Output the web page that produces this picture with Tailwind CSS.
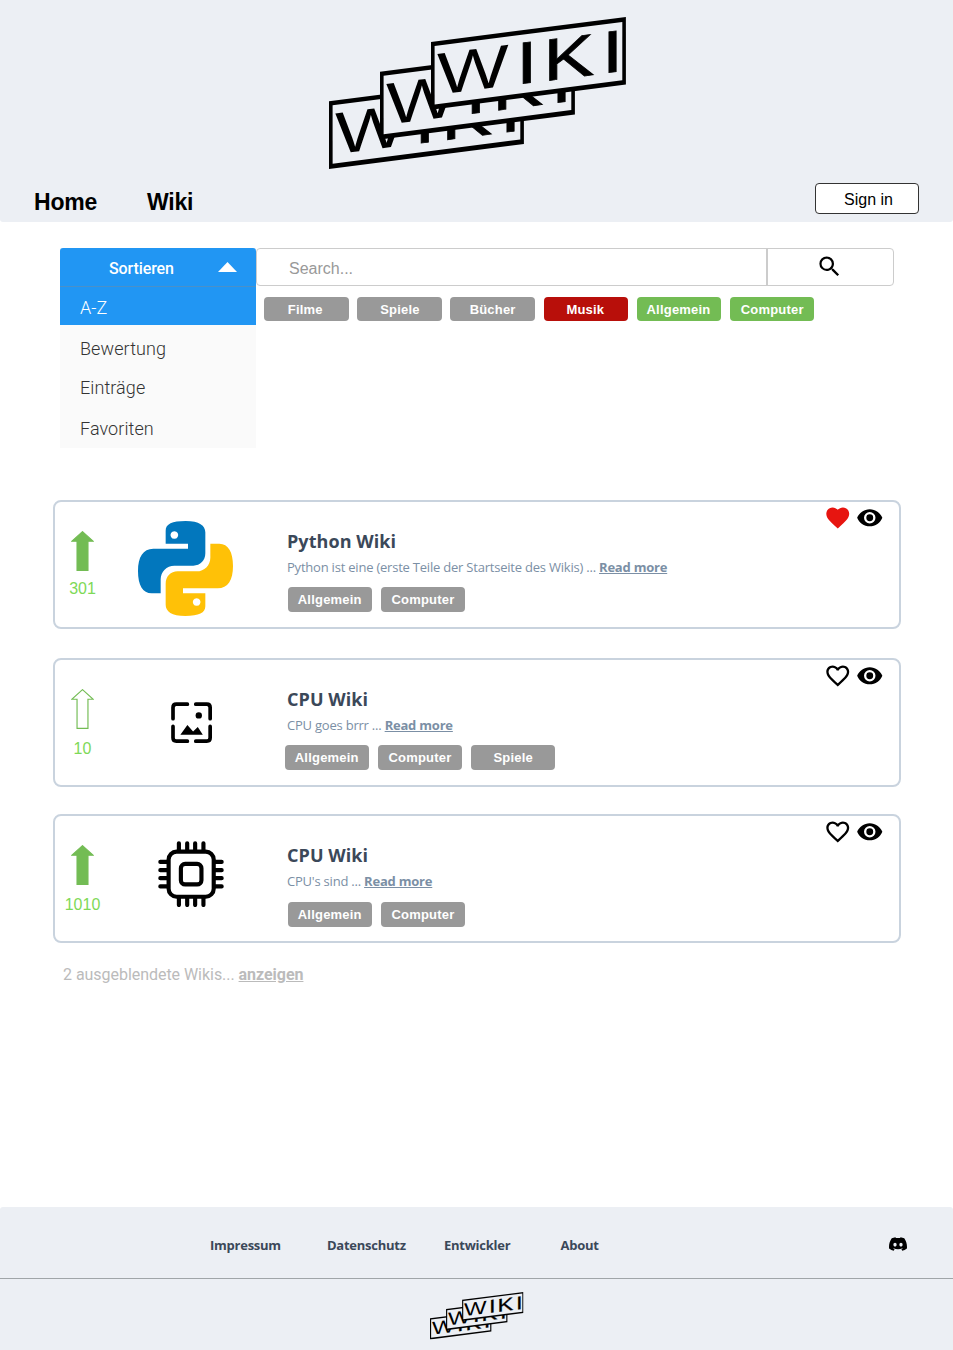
<!DOCTYPE html>
<html lang="de">
<head>
<meta charset="utf-8">
<title>Wiki</title>
<script src="https://cdn.jsdelivr.net/npm/@tailwindcss/browser@4"></script>
</head>
<body class="bg-white font-['Liberation_Sans',sans-serif] w-[953px]">
<svg class="hidden">
  <defs>
    <g id="plate">
      <path d="M0 25 L194.900 0 V67.600 L0 92.800Z" fill="#000"/>
      <path d="M3.600 28.900 L191.300 4.900 V63.200 L3.600 87.500Z" fill="#eceff4"/>
      <text transform="matrix(1.28 -0.1646 0 1 0 78.6)" font-family="Liberation Sans, sans-serif" font-size="59.3" stroke="#000" stroke-width=".8" x="4.7 66.7 87.9 133.6" y="0"><tspan stroke="none">W</tspan>IKI</text>
    </g>
    <symbol id="logo" viewBox="0 0 297 152.500" preserveAspectRatio="none">
      <use href="#plate" x="0" y="59.300"/>
      <use href="#plate" x="51" y="29.800"/>
      <use href="#plate" x="102" y="0"/>
    </symbol>
    <symbol id="heart" viewBox="0 0 24 24"><path d="M12,21.35L10.55,20.03C5.4,15.36 2,12.27 2,8.5C2,5.41 4.42,3 7.5,3C9.24,3 10.91,3.81 12,5.08C13.09,3.81 14.76,3 16.5,3C19.58,3 22,5.41 22,8.5C22,12.27 18.6,15.36 13.45,20.03L12,21.35Z"/></symbol>
    <symbol id="heart-o" viewBox="0 0 24 24"><path d="M12.1,18.55L12,18.65L11.89,18.55C7.14,14.24 4,11.39 4,8.5C4,6.5 5.5,5 7.5,5C9.04,5 10.54,6 11.07,7.36H12.93C13.46,6 14.96,5 16.5,5C18.5,5 20,6.5 20,8.5C20,11.39 16.86,14.24 12.1,18.55M16.5,3C14.76,3 13.09,3.81 12,5.08C10.91,3.81 9.24,3 7.5,3C4.42,3 2,5.41 2,8.5C2,12.27 5.4,15.36 10.55,20.03L12,21.35L13.45,20.03C18.6,15.36 22,12.27 22,8.5C22,5.41 19.58,3 16.5,3Z"/></symbol>
    <symbol id="eye" viewBox="0 0 24 24"><path d="M12,9A3,3 0 0,0 9,12A3,3 0 0,0 12,15A3,3 0 0,0 15,12A3,3 0 0,0 12,9M12,17A5,5 0 0,1 7,12A5,5 0 0,1 12,7A5,5 0 0,1 17,12A5,5 0 0,1 12,17M12,4.5C7,4.5 2.73,7.61 1,12C2.73,16.39 7,19.5 12,19.5C17,19.5 21.27,16.39 23,12C21.27,7.61 17,4.5 12,4.5Z"/></symbol>
    <symbol id="up" viewBox="0 0 69 121"><path d="M34.500 2 L67 31 H51 V119 H18 V31 H2Z" stroke-width="3.500"/></symbol>
  </defs>
</svg>

<div class="flex h-[1350px] flex-col">
  <header class="flex h-[222px] shrink-0 flex-col rounded-b-[3px] bg-[#eceff4]">
    <svg class="ml-[329.300px] mt-[17px] h-[152.500px] w-[297px] shrink-0"><use href="#logo"/></svg>
    <div class="mt-[13.500px] flex items-start pl-[34px] pr-[34px]">
      <nav class="flex pt-[3px] text-[23px] leading-8 font-bold tracking-[-0.200px] text-black">
        <a class="w-[113px]">Home</a>
        <a>Wiki</a>
      </nav>
      <button class="ml-auto flex h-[31px] w-[104px] items-center justify-center rounded-[4px] border border-[#333] bg-white pl-[3px] pt-[2px] text-[16px] text-black">Sign in</button>
    </div>
  </header>

  <section class="mt-[26px] flex h-[200px] shrink-0 pl-[60px]">
    <div class="flex w-[196px] flex-col bg-[#fafafa] font-[Roboto,sans-serif] text-[18px] font-light text-[#333]">
      <div class="flex h-[39px] shrink-0 items-center rounded-t-[3px] border-b border-[#4a90c8] bg-[#2196f3] pl-[49px] pt-[3px] text-[16px] font-medium tracking-[-0.100px] text-white">
        <span>Sortieren</span>
        <svg class="mb-[3px] ml-auto mr-[19px] h-[10px] w-[19px]" viewBox="0 0 19 10"><path d="M9.500 0 19 10H0z" fill="#fff"/></svg>
      </div>
      <div class="flex h-[38px] shrink-0 items-center bg-[#2196f3] pl-[20px] pt-[2px] text-white">A-Z</div>
      <div class="flex h-[41px] shrink-0 items-center pl-[20px] pt-[6px] tracking-[0.080px]">Bewertung</div>
      <div class="flex h-[41px] shrink-0 items-center pl-[20px] pt-px tracking-[0.080px]">Einträge</div>
      <div class="flex h-[41px] shrink-0 items-center pl-[20px] pt-px tracking-[0.080px]">Favoriten</div>
    </div>
    <div class="flex w-[638px] flex-col">
      <div class="flex h-[38px] rounded-[4px] border border-[#ccc]">
        <div class="flex w-[510.500px] items-center border-r-2 border-[#ccc] pl-[32px] pt-[3px] text-[16px] text-[#999]">Search...</div>
        <div class="flex flex-1 items-center pb-[2px] pl-[48.500px]">
          <svg class="h-[27px] w-[27px]" viewBox="0 0 24 24"><path d="M9.500,3A6.500,6.500 0 0,1 16,9.500C16,11.110 15.410,12.590 14.440,13.730L14.710,14H15.500L20.500,19L19,20.500L14,15.500V14.710L13.730,14.440C12.590,15.410 11.110,16 9.500,16A6.500,6.500 0 0,1 3,9.500A6.500,6.500 0 0,1 9.500,3M9.500,5C7,5 5,7 5,9.500C5,12 7,14 9.500,14C12,14 14,12 14,9.500C14,7 12,5 9.500,5Z"/></svg>
        </div>
      </div>
      <div class="mt-[10.500px] flex gap-[8.700px] pl-[8px] text-[13px] font-bold tracking-[0.200px] text-white">
        <span class="flex h-[24.500px] w-[84.500px] items-center justify-center rounded-[4px] bg-[#999] pr-[2px] pt-px">Filme</span>
        <span class="flex h-[24.500px] w-[84.500px] items-center justify-center rounded-[4px] bg-[#999] pl-px pt-px">Spiele</span>
        <span class="flex h-[24.500px] w-[84.500px] items-center justify-center rounded-[4px] bg-[#999] pt-px">Bücher</span>
        <span class="flex h-[24.500px] w-[84.500px] items-center justify-center rounded-[4px] bg-[#b80f0a] pr-px pt-px">Musik</span>
        <span class="flex h-[24.500px] w-[84.500px] items-center justify-center rounded-[4px] bg-[#73bc54] pr-px pt-px">Allgemein</span>
        <span class="flex h-[24.500px] w-[84.500px] items-center justify-center rounded-[4px] bg-[#73bc54] pt-px">Computer</span>
      </div>
    </div>
  </section>

  <main class="mt-[52px] flex w-[901px] flex-col pl-[52.500px]">
    <article class="flex h-[129px] rounded-[8px] border-[2.500px] border-[#c9d3de]">
      <div class="flex w-[56px] shrink-0 flex-col items-center pt-[28.500px]">
        <svg class="h-[40px] w-[23px]" fill="#73bc54" stroke="#73bc54"><use href="#up"/></svg>
        <span class="mt-[8px] text-[16px] leading-5 text-[#7ed957]">301</span>
      </div>
      <div class="w-[176.500px] shrink-0 pl-[27.500px] pt-[18.500px]">
        <svg class="h-[95px] w-[95px]" viewBox="264 93 285 285">
          <defs><path id="snake" d="M347 161V122C347 102 366 93 407 93S466 107 466 127V190C466 211 451 227 430 227H373C350 227 332 245 332 268V310H305C278 310 264 285 264 243S279 176 310 176H414V161ZM373 123.500a11.500 11.500 0 1 0 .1 0Z" fill-rule="evenodd"/></defs>
          <use href="#snake" fill="#0277bd"/><use href="#snake" fill="#ffc107" transform="rotate(180 406.500 235.500)"/>
        </svg>
      </div>
      <div class="flex flex-1 flex-col pt-[26.500px] font-['Open_Sans',sans-serif]">
        <h2 class="text-[18px] leading-6 font-bold tracking-[0.060px] text-[#3b4859]">Python Wiki</h2>
        <p class="mt-[4px] text-[13px] leading-5 tracking-[-0.215px] whitespace-nowrap text-[#7b8fa5]">Python ist eine (erste Teile der Startseite des Wikis) ... <a class="font-bold underline">Read more</a></p>
        <div class="mt-[10.700px] flex gap-[8.700px] pl-[0.500px] font-['Liberation_Sans',sans-serif] text-[13px] font-bold tracking-[0.200px] text-white">
          <span class="flex h-[24.500px] w-[84.500px] items-center justify-center rounded-[4px] bg-[#999] pt-px">Allgemein</span>
          <span class="flex h-[24.500px] w-[84.500px] items-center justify-center rounded-[4px] bg-[#999] pt-px">Computer</span>
        </div>
      </div>
      <div class="flex shrink-0 gap-[4.500px] pr-[16px] pt-[2px]">
        <svg class="h-[27.500px] w-[27.500px]" fill="#e71510"><use href="#heart"/></svg>
        <svg class="h-[27.500px] w-[27.500px]"><use href="#eye"/></svg>
      </div>
    </article>

    <article class="mt-[29px] flex h-[129px] rounded-[8px] border-[2.500px] border-[#c9d3de]">
      <div class="flex w-[56px] shrink-0 flex-col items-center pt-[28.500px]">
        <svg class="h-[40px] w-[23px]" fill="#fff" stroke="#73bc54"><use href="#up"/></svg>
        <span class="mt-[10px] text-[16px] leading-5 text-[#7ed957]">10</span>
      </div>
      <div class="w-[176.500px] shrink-0 pl-[60px] pt-[42.300px]">
        <svg class="h-[41.500px] w-[41.500px]" viewBox="362 158 124 124">
          <path d="M411 164.500H378Q368 164.500 368 174.500V208M436 164.500H469Q479 164.500 479 174.500V208M368 231V265Q368 275 378 275H411M479 231V265Q479 275 469 275H436" fill="none" stroke="#000" stroke-width="11" stroke-linecap="round"/>
          <circle cx="445" cy="198" r="9.500"/><path d="M390 256 411 227 428 246 442 233 457 256Z"/>
        </svg>
      </div>
      <div class="flex flex-1 flex-col pt-[26.500px] font-['Open_Sans',sans-serif]">
        <h2 class="text-[18px] leading-6 font-bold tracking-[0.060px] text-[#3b4859]">CPU Wiki</h2>
        <p class="mt-[4px] text-[13px] leading-5 tracking-[-0.215px] whitespace-nowrap text-[#7b8fa5]">CPU goes brrr ... <a class="font-bold underline">Read more</a></p>
        <div class="-ml-[2.500px] mt-[10.700px] flex gap-[8.700px] font-['Liberation_Sans',sans-serif] text-[13px] font-bold tracking-[0.200px] text-white">
          <span class="flex h-[24.500px] w-[84.500px] items-center justify-center rounded-[4px] bg-[#999] pt-px">Allgemein</span>
          <span class="flex h-[24.500px] w-[84.500px] items-center justify-center rounded-[4px] bg-[#999] pt-px">Computer</span>
          <span class="flex h-[24.500px] w-[84.500px] items-center justify-center rounded-[4px] bg-[#999] pt-px">Spiele</span>
        </div>
      </div>
      <div class="flex shrink-0 gap-[4.500px] pr-[16px] pt-[2px]">
        <svg class="h-[27.500px] w-[27.500px]"><use href="#heart-o"/></svg>
        <svg class="h-[27.500px] w-[27.500px]"><use href="#eye"/></svg>
      </div>
    </article>

    <article class="mt-[27px] flex h-[129px] rounded-[8px] border-[2.500px] border-[#c9d3de]">
      <div class="flex w-[56px] shrink-0 flex-col items-center pt-[28.500px]">
        <svg class="h-[40px] w-[23px]" fill="#73bc54" stroke="#73bc54"><use href="#up"/></svg>
        <span class="mt-[10px] text-[16px] leading-5 text-[#7ed957]">1010</span>
      </div>
      <div class="w-[176.500px] shrink-0 pl-[47.800px] pt-[24.700px]">
        <svg class="h-[66px] w-[66px]" viewBox="326 572 199 199" fill="none" stroke="#000" stroke-width="12.500" stroke-linecap="round">
          <rect x="358" y="604" width="136" height="136" rx="24"/><rect x="395" y="641" width="62" height="62" rx="13"/>
          <path d="M389 579V600M414 579V600M438 579V600M463 579V600M389 744V765M414 744V765M438 744V765M463 744V765M333 635H354M333 660H354M333 684H354M333 709H354M498 635H518M498 660H518M498 684H518M498 709H518"/>
        </svg>
      </div>
      <div class="flex flex-1 flex-col pt-[26.500px] font-['Open_Sans',sans-serif]">
        <h2 class="text-[18px] leading-6 font-bold tracking-[0.060px] text-[#3b4859]">CPU Wiki</h2>
        <p class="mt-[4px] text-[13px] leading-5 tracking-[-0.215px] whitespace-nowrap text-[#7b8fa5]">CPU's sind ... <a class="font-bold underline">Read more</a></p>
        <div class="mt-[11.700px] flex gap-[8.700px] pl-[0.500px] font-['Liberation_Sans',sans-serif] text-[13px] font-bold tracking-[0.200px] text-white">
          <span class="flex h-[24.500px] w-[84.500px] items-center justify-center rounded-[4px] bg-[#999] pt-px">Allgemein</span>
          <span class="flex h-[24.500px] w-[84.500px] items-center justify-center rounded-[4px] bg-[#999] pt-px">Computer</span>
        </div>
      </div>
      <div class="flex shrink-0 gap-[4.500px] pr-[16px] pt-[2px]">
        <svg class="h-[27.500px] w-[27.500px]"><use href="#heart-o"/></svg>
        <svg class="h-[27.500px] w-[27.500px]"><use href="#eye"/></svg>
      </div>
    </article>
    <p class="mt-[20px] pl-[10.500px] font-[Roboto,sans-serif] text-[16px] leading-6 tracking-[-0.040px] text-[#bbb]">2 ausgeblendete Wikis... <a class="font-bold underline">anzeigen</a></p>
  </main>

  <footer class="mt-auto flex h-[143px] shrink-0 flex-col rounded-t-[3px] bg-[#eceff4]">
    <div class="flex h-[72px] items-center border-b border-[#a0a5a8] pl-[210px] pr-[46px] pt-[6px] font-['Open_Sans',sans-serif] text-[13px] font-bold tracking-[-0.250px] text-[#3b4859]">
      <a class="w-[117px]">Impressum</a><a class="w-[117px]">Datenschutz</a><a class="w-[116.500px]">Entwickler</a><a>About</a>
      <svg class="mb-[3px] ml-auto h-[18px] w-[18px]" viewBox="0 0 24 24" fill="#000"><path d="M20.317 4.3698a19.7913 19.7913 0 00-4.8851-1.5152.0741.0741 0 00-.0785.0371c-.211.3753-.4447.8648-.6083 1.2495-1.8447-.2762-3.68-.2762-5.4868 0-.1636-.3933-.4058-.8742-.6177-1.2495a.077.077 0 00-.0785-.037 19.7363 19.7363 0 00-4.8852 1.515.0699.0699 0 00-.0321.0277C.5334 9.0458-.319 13.5799.0992 18.0578a.0824.0824 0 00.0312.0561c2.0528 1.5076 4.0413 2.4228 5.9929 3.0294a.0777.0777 0 00.0842-.0276c.4616-.6304.8731-1.2952 1.226-1.9942a.076.076 0 00-.0416-.1057c-.6528-.2476-1.2743-.5495-1.8722-.8923a.077.077 0 01-.0076-.1277c.1258-.0943.2517-.1923.3718-.2914a.0743.0743 0 01.0776-.0105c3.9278 1.7933 8.18 1.7933 12.0614 0a.0739.0739 0 01.0785.0095c.1202.099.246.1981.3728.2924a.077.077 0 01-.0066.1276 12.2986 12.2986 0 01-1.873.8914.0766.0766 0 00-.0407.1067c.3604.698.7719 1.3628 1.225 1.9932a.076.076 0 00.0842.0286c1.961-.6067 3.9495-1.5219 6.0023-3.0294a.077.077 0 00.0313-.0552c.5004-5.177-.8382-9.6739-3.5485-13.6604a.061.061 0 00-.0312-.0286zM8.02 15.3312c-1.1825 0-2.1569-1.0857-2.1569-2.419 0-1.3332.9555-2.4189 2.157-2.4189 1.2108 0 2.1757 1.0952 2.1568 2.419 0 1.3332-.9555 2.4189-2.1569 2.4189zm7.9748 0c-1.1825 0-2.1569-1.0857-2.1569-2.419 0-1.3332.9554-2.4189 2.1569-2.4189 1.2108 0 2.1757 1.0952 2.1568 2.419 0 1.3332-.946 2.4189-2.1568 2.4189Z"/></svg>
    </div>
    <svg class="ml-[430.300px] mt-[13.300px] h-[47.500px] w-[93.500px]"><use href="#logo"/></svg>
  </footer>
</div>
</body>
</html>
